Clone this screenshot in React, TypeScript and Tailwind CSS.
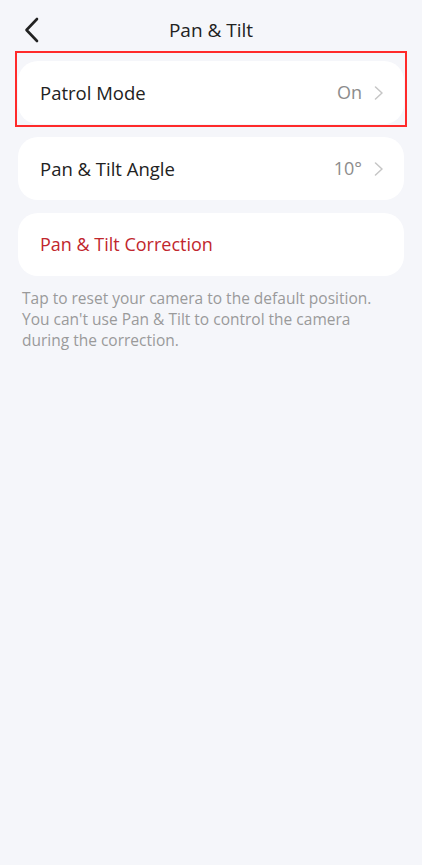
function Chevron() {
  return (
    <svg width="10" height="14" viewBox="0 0 10 14" fill="none">
      <path d="M1.5 1 L8 7 L1.5 13" stroke="#c6c6c6" strokeWidth="1.5" strokeLinecap="round" strokeLinejoin="round" />
    </svg>
  );
}

function Row({ label, value }: { label: string; value: string }) {
  return (
    <div className="flex h-[63px] items-center justify-between rounded-[20px] bg-white pl-[22px] pr-[20px]">
      <span className="text-[18.5px] text-[#222]">{label}</span>
      <div className="flex items-center gap-[12px]">
        <span className="text-[18px] text-[#8c8c8c]">{value}</span>
        <Chevron />
      </div>
    </div>
  );
}

export default function App() {
  return (
    <div className="min-h-[865px] bg-[#f5f6fa] font-['Open_Sans',sans-serif]">
      {/* Header */}
      <div className="relative flex h-[60px] items-center justify-center">
        <button className="absolute left-[22px] top-[17px]">
          <svg width="20" height="26" viewBox="0 0 20 26" fill="none">
            <path d="M15 2 L4.5 13 L15 24" stroke="#222" strokeWidth="2.6" strokeLinecap="round" strokeLinejoin="round" />
          </svg>
        </button>
        <h1 className="text-[19px] text-[#222]">Pan &amp; Tilt</h1>
      </div>

      <div className="px-[18px]">
        {/* highlighted row */}
        <div className="-mx-[3px] -mt-[9px] border-2 border-[#ff2a2a] px-[1px] pt-[8px] pb-[1px]">
          <Row label="Patrol Mode" value="On" />
        </div>

        <div className="mt-[10px] flex flex-col gap-[13px]">
          <Row label="Pan & Tilt Angle" value="10°" />
          <div className="flex h-[63px] items-center rounded-[20px] bg-white pl-[22px]">
            <span className="text-[18px] text-[#c1272d]">Pan &amp; Tilt Correction</span>
          </div>
        </div>

        <p className="mt-[12px] pl-[4px] pr-[26px] text-[15.5px] leading-[21px] text-[#9a9a9a]">
          Tap to reset your camera to the default position. You can't use Pan &amp; Tilt to control the camera during the correction.
        </p>
      </div>
    </div>
  );
}
